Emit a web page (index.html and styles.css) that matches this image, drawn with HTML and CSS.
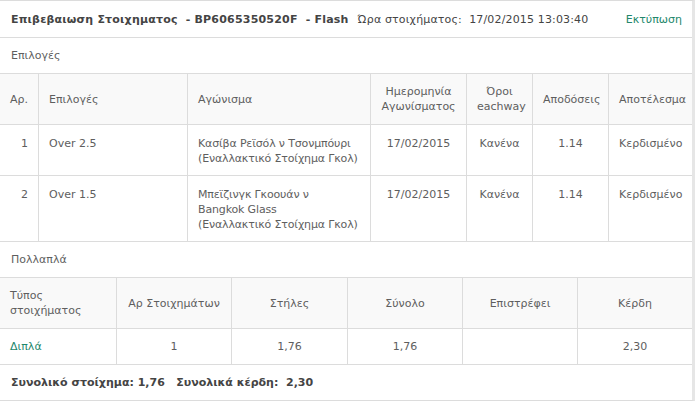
FILE: index.html
```html
<!DOCTYPE html>
<html lang="el">
<head>
<meta charset="utf-8">
<title>Επιβεβαιωση Στοιχηματος</title>
<link rel="stylesheet" href="styles.css">
</head>
<body>
<div class="receipt">
  <div class="topbar">
    <span class="title">Επιβεβαιωση Στοιχηματος&nbsp; - BP6065350520F&nbsp; - Flash</span>
    <span class="time">Ώρα στοιχήματος:&nbsp; 17/02/2015 13:03:40</span>
    <a class="print" href="#">Εκτύπωση</a>
  </div>

  <div class="section">Επιλογές</div>
  <div class="grid sel">
    <div class="th r">Αρ.</div>
    <div class="th l">Επιλογές</div>
    <div class="th l">Αγώνισμα</div>
    <div class="th c">Ημερομηνία<br>Αγωνίσματος</div>
    <div class="th c">Όροι<br>eachway</div>
    <div class="th c">Αποδόσεις</div>
    <div class="th c last">Αποτέλεσμα</div>

    <div class="td r">1</div>
    <div class="td l">Over 2.5</div>
    <div class="td l match">Κασίβα Ρεϊσόλ ν Τσονμπόυρι<br>(Εναλλακτικό Στοίχημα Γκολ)</div>
    <div class="td c">17/02/2015</div>
    <div class="td c">Κανένα</div>
    <div class="td c">1.14</div>
    <div class="td c last">Κερδισμένο</div>

    <div class="td r">2</div>
    <div class="td l">Over 1.5</div>
    <div class="td l match">Μπεϊζινγκ Γκοουάν ν<br>Bangkok Glass<br>(Εναλλακτικό Στοίχημα Γκολ)</div>
    <div class="td c">17/02/2015</div>
    <div class="td c">Κανένα</div>
    <div class="td c">1.14</div>
    <div class="td c last">Κερδισμένο</div>
  </div>

  <div class="section">Πολλαπλά</div>
  <div class="grid multi">
    <div class="th l">Τύπος<br>στοιχήματος</div>
    <div class="th c">Αρ Στοιχημάτων</div>
    <div class="th c">Στήλες</div>
    <div class="th c">Σύνολο</div>
    <div class="th c">Επιστρέφει</div>
    <div class="th c last">Κέρδη</div>

    <div class="td2 l green">Διπλά</div>
    <div class="td2 c">1</div>
    <div class="td2 c">1,76</div>
    <div class="td2 c">1,76</div>
    <div class="td2 c"></div>
    <div class="td2 c last">2,30</div>
  </div>

  <div class="totals">Συνολικό στοίχημα: 1,76&nbsp;&nbsp; Συνολικά κέρδη:&nbsp; 2,30</div>
</div>
</body>
</html>
```

FILE: styles.css
```css
* { box-sizing: border-box; }
html, body { margin: 0; padding: 0; background: #fff; }
body {
  font-family: "DejaVu Sans", Verdana, sans-serif;
  font-size: 11px;
  line-height: 15px;
  color: #5e5e5e;
}
.receipt {
  width: 695px;
  border-top: 1px solid #dcdcdc;
  border-right: 3px solid #e6e6e6;
  border-bottom: 1px solid #dcdcdc;
}
.topbar {
  display: flex;
  align-items: center;
  height: 37px;
  padding: 0 10px 0 11px;
  border-bottom: 1px solid #dcdcdc;
  color: #444;
  white-space: nowrap;
}
.title { font-weight: bold; letter-spacing: 0.2px; }
.time { margin-left: 9px; letter-spacing: 0.15px; }
.print {
  margin-left: auto;
  color: #23876c;
  text-decoration: none;
}
.section {
  height: 36px;
  padding: 0 11px;
  display: flex;
  align-items: center;
  border-bottom: 1px solid #dcdcdc;
}
.grid { display: grid; }
.sel { grid-template-columns: 39px 149px 183px 96px 66px 76px 83px; }
.multi { grid-template-columns: 117px 115px 116px 115px 115px 114px; }
.th, .td, .td2 {
  border-right: 1px solid #dcdcdc;
  border-bottom: 1px solid #dcdcdc;
  padding-left: 10px;
  padding-right: 10px;
}
.th {
  height: 51px;
  background: #f9f9f9;
  display: flex;
  flex-direction: column;
  justify-content: center;
}
.td { padding-top: 11px; padding-bottom: 9px; }
.match { white-space: nowrap; padding-right: 4px; letter-spacing: -0.15px; }
.td2 { height: 36px; display: flex; flex-direction: column; justify-content: center; }
.last { border-right: 0; }
.l { text-align: left; padding-left: 10px; }
.c { text-align: center; }
.r { text-align: right; }
.green { color: #23876c; }
.totals {
  height: 35px;
  padding: 0 11px;
  display: flex;
  align-items: center;
  font-weight: bold;
  color: #444;
  white-space: nowrap;
}
```
